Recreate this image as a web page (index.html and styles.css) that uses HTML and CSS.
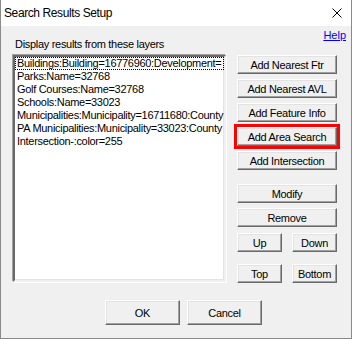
FILE: index.html
```html
<!DOCTYPE html>
<html lang="en">
<head>
  <meta charset="UTF-8">
  <meta name="viewport" content="width=device-width, initial-scale=1.0">
  <title>Search Results Setup</title>
  <link rel="stylesheet" href="styles.css">
</head>
<body>
  <div class="dialog">
    <div class="titlebar">
      <span class="title">Search Results Setup</span>
      <svg class="close" width="10" height="10" viewBox="0 0 10 10">
        <path d="M0.5 0.5 L9.5 9.5 M9.5 0.5 L0.5 9.5" stroke="#000" stroke-width="1" fill="none"/>
      </svg>
    </div>

    <div class="content">
      <div class="top-row">
        <div class="layers-label">Display results from these layers</div>
        <a href="#" class="help">Help</a>
      </div>

      <div class="main">
        <div class="listbox">
          <div class="item focused">Buildings:Building=16776960:Development=</div>
          <div class="item">Parks:Name=32768</div>
          <div class="item">Golf Courses:Name=32768</div>
          <div class="item">Schools:Name=33023</div>
          <div class="item">Municipalities:Municipality=16711680:County</div>
          <div class="item">PA Municipalities:Municipality=33023:County</div>
          <div class="item">Intersection-:color=255</div>
        </div>

        <div class="actions">
          <div class="stack">
            <button class="btn">Add Nearest Ftr</button>
            <button class="btn">Add Nearest AVL</button>
            <button class="btn">Add Feature Info</button>
            <button class="btn highlight">Add Area Search</button>
            <button class="btn">Add Intersection</button>
          </div>
          <div class="stack edit">
            <button class="btn">Modify</button>
            <button class="btn">Remove</button>
          </div>
          <div class="pair">
            <button class="btn">Up</button>
            <button class="btn">Down</button>
          </div>
          <div class="pair last">
            <button class="btn">Top</button>
            <button class="btn">Bottom</button>
          </div>
        </div>
      </div>

      <div class="footer">
        <button class="btn big">OK</button>
        <button class="btn big">Cancel</button>
      </div>
    </div>
  </div>
</body>
</html>
```

FILE: styles.css
```css
* { box-sizing: border-box; }
body { margin: 0; background: #fff; font-family: 'Liberation Sans', Arial, sans-serif; }

.dialog {
  width: 352px;
  height: 339px;
  display: flex;
  flex-direction: column;
  background: #f0f0f0;
  border: 1px solid #8a8a8a;
  border-top: none;
}

.titlebar {
  height: 26px;
  flex: none;
  background: #fff;
  display: flex;
  align-items: center;
  justify-content: space-between;
  padding: 0 9px 0 3px;
}
.title {
  font-size: 12px;
  letter-spacing: -0.4px;
  color: #000;
}

.content {
  flex: 1;
  padding: 3px 14px 0 12px;
  font-size: 11px;
  letter-spacing: -0.3px;
  color: #000;
}

.top-row {
  display: flex;
  justify-content: space-between;
  align-items: flex-start;
  height: 26px;
  margin-right: -9px;
}
.layers-label {
  line-height: 13px;
  padding-top: 9px;
  padding-left: 2px;
}
.help {
  line-height: 13px;
  color: #0000ff;
  letter-spacing: 0;
}

.main {
  display: grid;
  grid-template-columns: 213px 100px;
  column-gap: 11px;
}

.listbox {
  height: 227px;
  background: #fff;
  border: 2px solid;
  border-color: #696969 #f0f0f0 #f0f0f0 #696969;
  box-shadow: 1px 1px 0 #fff, -1px -1px 0 #a0a0a0, inset -1px -1px 0 #e3e3e3;
  overflow: hidden;
}
.item {
  height: 13px;
  line-height: 13px;
  padding-left: 2px;
  white-space: nowrap;
  overflow: hidden;
}
.item.focused {
  outline: 1px dotted #000;
  outline-offset: -1px;
}

.actions {
  display: flex;
  flex-direction: column;
}
.stack {
  display: flex;
  flex-direction: column;
  gap: 5px;
}
.stack.edit { margin-top: 14px; }
.pair {
  display: flex;
  justify-content: space-between;
  margin-top: 6px;
}
.pair .btn { width: 45px; }
.pair.last { margin-top: 12px; }

.btn {
  height: 19px;
  padding: 0;
  font-family: inherit;
  font-size: 11px;
  letter-spacing: -0.3px;
  color: #000;
  background: #f0f0f0;
  border: 1px solid;
  border-color: #fff #696969 #696969 #fff;
  box-shadow: inset -1px -1px 0 #a0a0a0, inset 1px 1px 0 #e3e3e3;
  border-radius: 0;
}
.btn.highlight {
  outline: 3px solid #ff0000;
}

.footer {
  display: flex;
  gap: 7px;
  padding-left: 92px;
  margin-top: 17px;
}
.btn.big {
  width: 75px;
  height: 25px;
}
```
